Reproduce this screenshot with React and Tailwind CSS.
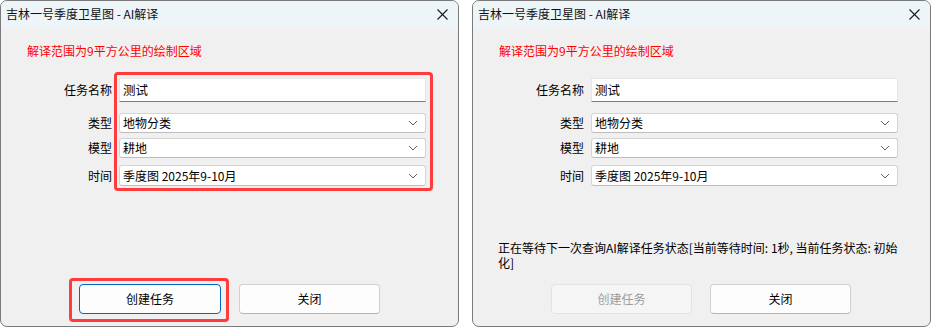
import React from "react";

const font = { fontFamily: '"Segoe UI", "Noto Sans CJK SC", "Noto Sans", sans-serif' };

function Chevron() {
    return (
        <svg width="10" height="6" viewBox="0 0 10 6" className="shrink-0">
            <path d="M1 1 L5 5 L9 1" fill="none" stroke="#5f5f5f" strokeWidth="1" />
        </svg>
    );
}

function CloseIcon() {
    return (
        <svg width="11" height="11" viewBox="0 0 11 11">
            <path d="M0.5 0.5 L10.5 10.5 M10.5 0.5 L0.5 10.5" stroke="#1a1a1a" strokeWidth="1.1" />
        </svg>
    );
}

const Select = ({ value, h = "h-[20px]" }) => (
    <div className={`${h} w-[307px] bg-white border border-[#d4d4d4] border-b-[#bdbdbd] rounded-[3px] flex items-center justify-between pl-[3px] pr-[7px]`}>
        <span className="text-[12px] leading-none text-black">{value}</span>
        <Chevron />
    </div>
);

const Row = ({ label, children, className = "" }) => (
    <div className={`flex items-center ${className}`}>
        <div className="w-[111px] text-right text-[12px] leading-none text-black">{label}</div>
        <div className="ml-[7px]">{children}</div>
    </div>
);

function Dialog({ running }) {
    return (
        <div className="relative w-[459px] h-[327px] flex flex-col bg-[#f0f0f0] border border-[#7a7a7a] rounded-[7px] overflow-hidden">
            <div className="h-[26px] shrink-0 bg-[#edf5f8] flex items-center justify-between pl-[5px] pr-[10px]">
                <span className="text-[12px] leading-none text-[#111]">吉林一号季度卫星图 - AI解译</span>
                <CloseIcon />
            </div>
            <div className="flex-1 flex flex-col">
                <div className="mt-[16px] ml-[26px] text-[12px] leading-[16px] text-[#ff0000]">解译范围为9平方公里的绘制区域</div>
                <div className="mt-[19px] flex flex-col">
                    <Row label="任务名称">
                        <div className="h-[24px] w-[307px] bg-white border border-[#e6e6e6] border-b-[#7b7b7b] flex items-center pl-[3px]">
                            <span className="text-[12.5px] leading-none text-black">测试</span>
                        </div>
                    </Row>
                    <Row label="类型" className="mt-[11px]"><Select value="地物分类" /></Row>
                    <Row label="模型" className="mt-[5px]"><Select value="耕地" /></Row>
                    <Row label="时间" className="mt-[7px]"><Select value="季度图 2025年9-10月" h="h-[21px]" /></Row>
                </div>
                <div className="flex-1 flex flex-col justify-start">
                    {running && (
                        <div className="mt-[54px] ml-[25px] text-[12px] leading-[15px] text-black">
                            <div className="whitespace-nowrap">正在等待下一次查询AI解译任务状态[当前等待时间: 1秒, 当前任务状态: 初始</div>
                            <div className="whitespace-nowrap">化]</div>
                        </div>
                    )}
                </div>
                <div className="flex gap-[18px] ml-[78px] mb-[12px]">
                    {running ? (
                        <div className="w-[141px] h-[30px] rounded-[4px] bg-[#f5f5f5] border border-[#e3e3e3] flex items-center justify-center text-[12px] text-[#9d9d9d]">创建任务</div>
                    ) : (
                        <div className="w-[142px] h-[30px] rounded-[4px] bg-[#fdfdfd] border border-[#0067c0] flex items-center justify-center text-[12px] text-black">创建任务</div>
                    )}
                    <div className="w-[141px] h-[30px] rounded-[4px] bg-[#fdfdfd] border border-[#d0d0d0] border-b-[#b5b5b5] flex items-center justify-center text-[12px] text-black">关闭</div>
                </div>
            </div>
            {!running && (
                <>
                    <div className="absolute left-[113px] top-[71px] w-[319px] h-[119px] border-[3px] border-[#ff3b3b] rounded-[4px]" />
                    <div className="absolute left-[68px] top-[277px] w-[160px] h-[44px] border-[3px] border-[#ff3b3b] rounded-[4px]" />
                </>
            )}
        </div>
    );
}

export default function App() {
    return (
        <div className="w-[934px] h-[328px] bg-white flex gap-[13px]" style={font}>
            <Dialog running={false} />
            <Dialog running={true} />
        </div>
    );
}
